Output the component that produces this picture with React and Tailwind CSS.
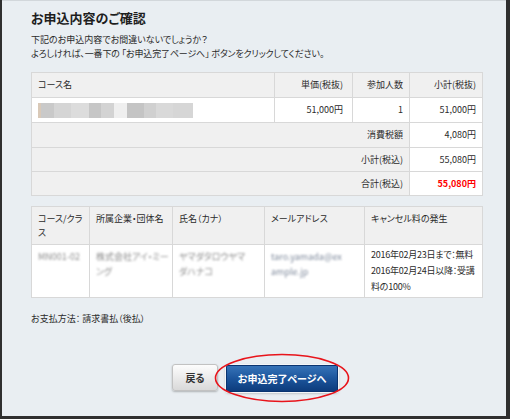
import React from "react";

const F = "font-['Noto_Sans_CJK_JP',sans-serif] [font-feature-settings:'palt']";

function Blur({ children, className = "" }) {
  return <span className={"blur-[1.1px] select-none whitespace-nowrap " + className}>{children}</span>;
}

function Mosaic() {
  const tiles = [
    ["w-[3px]", "bg-[#d9c9b8]"],
    ["w-[13px]", "bg-[#c9c9c9]"],
    ["w-[17px]", "bg-[#d5d5d5]"],
    ["w-[18px]", "bg-[#dcdcdc]"],
    ["w-[12px]", "bg-[#c6c6c6]"],
    ["w-[13px]", "bg-[#d3d3d3]"],
    ["w-[13px]", "bg-[#efefef]"],
    ["w-[17px]", "bg-[#c4c4c4]"],
    ["w-[12px]", "bg-[#d0d0d0]"],
    ["w-[17px]", "bg-[#d9d9d9]"],
    ["w-[20px]", "bg-[#d6d6d6]"],
  ];
  return (
    <div className="flex h-[15px]">
      {tiles.map(([w, c], i) => (
        <div key={i} className={w + " " + c + " h-full"} />
      ))}
    </div>
  );
}

export default function App() {
  return (
    <div className={"w-[510px] h-[419px] bg-[#2f2f2f] pl-[2px] pr-[4px] pb-[3px] " + F}>
      <div className="h-full bg-[#e9eef2] border-t border-t-[#d2d7db] px-[29px] pt-[9px] text-[#2b2b2b] relative">
        <h1 className="text-[13px] font-bold leading-[16px] text-[#1e1e1e]">お申込内容のご確認</h1>
        <p className="mt-[7px] text-[9px] leading-[14px] whitespace-nowrap">
          下記のお申込内容でお間違いないでしょうか？
          <br />
          <span className="tracking-[-0.15px]">よろしければ、一番下の 「お申込完了ページへ」 ボタンをクリックしてください。</span>
        </p>

        {/* Table 1 */}
        <div className="mt-[11px] w-[452px] grid grid-cols-[242px_77px_56px_72px] gap-px bg-[#d8d8d8] p-px text-[9px]">
          <div className="h-[24px] bg-[#f0f0f0] flex items-center px-[6px]">コース名</div>
          <div className="h-[24px] bg-[#f0f0f0] flex items-center justify-end px-[9px]">単価(税抜)</div>
          <div className="h-[24px] bg-[#f0f0f0] flex items-center justify-end px-[6px]">参加人数</div>
          <div className="h-[24px] bg-[#f0f0f0] flex items-center justify-end px-[6px]">小計(税抜)</div>

          <div className="h-[24px] bg-white flex items-center px-[6px]"><Mosaic /></div>
          <div className="h-[24px] bg-white flex items-center justify-end px-[9px]">51,000円</div>
          <div className="h-[24px] bg-white flex items-center justify-end px-[6px]">1</div>
          <div className="h-[24px] bg-white flex items-center justify-end px-[6px]">51,000円</div>

          <div className="col-span-3 h-[24px] bg-[#f0f0f0] flex items-center justify-end px-[6px]">消費税額</div>
          <div className="h-[24px] bg-white flex items-center justify-end px-[6px]">4,080円</div>

          <div className="col-span-3 h-[23px] bg-[#f0f0f0] flex items-center justify-end px-[6px]">小計(税込)</div>
          <div className="h-[23px] bg-white flex items-center justify-end px-[6px]">55,080円</div>

          <div className="col-span-3 h-[23px] bg-[#f0f0f0] flex items-center justify-end px-[6px]">合計(税込)</div>
          <div className="h-[23px] bg-white flex items-center justify-end px-[6px] font-bold text-[#ff0000]">55,080円</div>
        </div>

        {/* Table 2 */}
        <div className="mt-[10px] w-[452px] grid grid-cols-[57px_82px_91px_99px_117px] gap-px bg-[#d8d8d8] p-px text-[9px] leading-[14px]">
          <div className="h-[37px] bg-[#f0f0f0] px-[6px] pt-[5px] whitespace-nowrap">コース/クラ<br />ス</div>
          <div className="h-[37px] bg-[#f0f0f0] px-[6px] pt-[5px] whitespace-nowrap">所属企業・団体名</div>
          <div className="h-[37px] bg-[#f0f0f0] px-[6px] pt-[5px] whitespace-nowrap">氏名（カナ）</div>
          <div className="h-[37px] bg-[#f0f0f0] px-[6px] pt-[5px] whitespace-nowrap">メールアドレス</div>
          <div className="h-[37px] bg-[#f0f0f0] px-[6px] pt-[5px] whitespace-nowrap">キャンセル料の発生</div>

          <div className="h-[52px] bg-white px-[6px] pt-[4px] leading-[15px] text-[#8c8c8c] overflow-hidden">
            <Blur>MN001-02</Blur>
          </div>
          <div className="h-[52px] bg-white px-[6px] pt-[4px] leading-[15px] text-[#8c8c8c] overflow-hidden">
            <Blur>株式会社アイ・ミー</Blur>
            <br />
            <Blur>ング</Blur>
          </div>
          <div className="h-[52px] bg-white px-[6px] pt-[4px] leading-[15px] text-[#8c8c8c] overflow-hidden">
            <Blur>ヤマダタロウヤマ</Blur>
            <br />
            <Blur>ダハナコ</Blur>
          </div>
          <div className="h-[52px] bg-white px-[6px] pt-[4px] leading-[15px] text-[#7f8a9c] overflow-hidden">
            <Blur>taro.yamada@ex</Blur>
            <br />
            <Blur>ample.jp</Blur>
          </div>
          <div className="h-[52px] bg-white px-[6px] pt-[2px] leading-[16px] whitespace-nowrap tracking-[-0.25px]">
            2016年02月23日まで：無料
            <br />
            2016年02月24日以降：受講
            <br />
            料の100%
          </div>
        </div>

        <p className="mt-[14px] text-[9px] leading-[14px]">お支払方法： 請求書払（後払）</p>

        <div className="mt-[38px] flex justify-center gap-[8px] pl-[2px]">
          <button className="w-[46px] h-[27px] rounded-[3px] border border-[#c2c2c2] bg-linear-to-b from-[#fdfdfd] to-[#d9d9d9] shadow-[0_1px_2px_rgba(0,0,0,0.25)] text-[10px] font-bold text-[#333]">
            戻る
          </button>
          <div className="relative">
            <button className="w-[112px] h-[27px] rounded-[2px] border border-[#0a3470] bg-linear-to-b from-[#3673b8] via-[#1c559c] to-[#0d3c7c] shadow-[0_0_0_1px_#f4f6f8,0_1px_3px_rgba(0,0,0,0.35)] text-[10px] font-bold text-white">
              お申込完了ページへ
            </button>
            <svg className="absolute left-[-12px] top-[-11px] pointer-events-none" width="136" height="50" viewBox="0 0 136 50">
              <ellipse cx="68" cy="25" rx="66.5" ry="23.5" fill="none" stroke="#e8141b" strokeWidth="1.6" />
            </svg>
          </div>
        </div>
      </div>
    </div>
  );
}
